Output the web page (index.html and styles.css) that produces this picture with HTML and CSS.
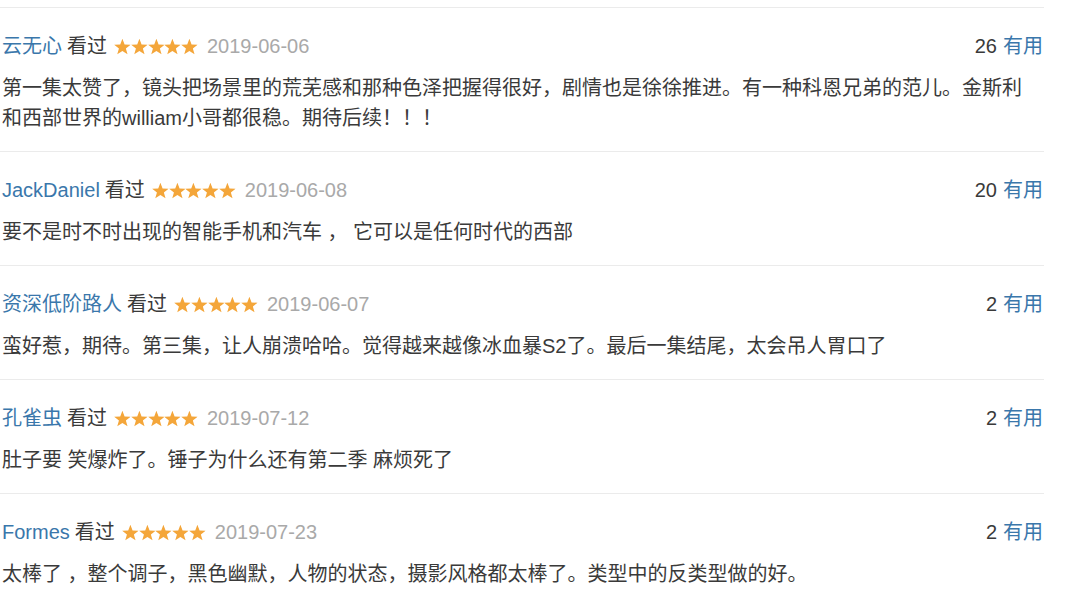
FILE: index.html
```html
<!DOCTYPE html>
<html lang="zh-CN">
<head>
<meta charset="utf-8">
<title>短评</title>
<link rel="stylesheet" href="styles.css">
</head>
<body>
<svg width="0" height="0" class="defs" aria-hidden="true">
  <defs>
    <symbol id="star" viewBox="0 0 17 16">
      <polygon points="8.5,0.2 10.7,5.9 16.8,6.2 12.0,10.0 13.7,15.9 8.5,12.6 3.3,15.9 5.0,10.0 0.2,6.2 6.3,5.9" fill="#f4a63a"/>
    </symbol>
  </defs>
</svg>
<div class="comments">
  <div class="comment">
    <div class="head">
      <div class="info">
        <span class="user">云无心</span><span class="seen">看过</span>
        <span class="stars"><svg><use href="#star"/></svg><svg><use href="#star"/></svg><svg><use href="#star"/></svg><svg><use href="#star"/></svg><svg><use href="#star"/></svg></span>
        <span class="date">2019-06-06</span>
      </div>
      <div class="votes"><span class="count">26</span><span class="useful">有用</span></div>
    </div>
    <p class="text">第一集太赞了，镜头把场景里的荒芜感和那种色泽把握得很好，剧情也是徐徐推进。有一种科恩兄弟的范儿。金斯利和西部世界的william小哥都很稳。期待后续！！！</p>
  </div>
  <div class="comment">
    <div class="head">
      <div class="info">
        <span class="user">JackDaniel</span><span class="seen">看过</span>
        <span class="stars"><svg><use href="#star"/></svg><svg><use href="#star"/></svg><svg><use href="#star"/></svg><svg><use href="#star"/></svg><svg><use href="#star"/></svg></span>
        <span class="date">2019-06-08</span>
      </div>
      <div class="votes"><span class="count">20</span><span class="useful">有用</span></div>
    </div>
    <p class="text">要不是时不时出现的智能手机和汽车 ， 它可以是任何时代的西部</p>
  </div>
  <div class="comment">
    <div class="head">
      <div class="info">
        <span class="user">资深低阶路人</span><span class="seen">看过</span>
        <span class="stars"><svg><use href="#star"/></svg><svg><use href="#star"/></svg><svg><use href="#star"/></svg><svg><use href="#star"/></svg><svg><use href="#star"/></svg></span>
        <span class="date">2019-06-07</span>
      </div>
      <div class="votes"><span class="count">2</span><span class="useful">有用</span></div>
    </div>
    <p class="text">蛮好惹，期待。第三集，让人崩溃哈哈。觉得越来越像冰血暴S2了。最后一集结尾，太会吊人胃口了</p>
  </div>
  <div class="comment">
    <div class="head">
      <div class="info">
        <span class="user">孔雀虫</span><span class="seen">看过</span>
        <span class="stars"><svg><use href="#star"/></svg><svg><use href="#star"/></svg><svg><use href="#star"/></svg><svg><use href="#star"/></svg><svg><use href="#star"/></svg></span>
        <span class="date">2019-07-12</span>
      </div>
      <div class="votes"><span class="count">2</span><span class="useful">有用</span></div>
    </div>
    <p class="text">肚子要 笑爆炸了。锤子为什么还有第二季 麻烦死了</p>
  </div>
  <div class="comment">
    <div class="head">
      <div class="info">
        <span class="user">Formes</span><span class="seen">看过</span>
        <span class="stars"><svg><use href="#star"/></svg><svg><use href="#star"/></svg><svg><use href="#star"/></svg><svg><use href="#star"/></svg><svg><use href="#star"/></svg></span>
        <span class="date">2019-07-23</span>
      </div>
      <div class="votes"><span class="count">2</span><span class="useful">有用</span></div>
    </div>
    <p class="text">太棒了 ，整个调子，黑色幽默，人物的状态，摄影风格都太棒了。类型中的反类型做的好。</p>
  </div>
</div>
</body>
</html>
```

FILE: styles.css
```css
html, body {
  margin: 0;
  padding: 0;
  background: #fff;
}

body {
  font-family: "Liberation Sans", "Noto Sans CJK SC", sans-serif;
  font-size: 20px;
  color: #3a3a3a;
}

.defs {
  position: absolute;
  width: 0;
  height: 0;
}

.comments {
  width: 1044px;
  padding-top: 7px;
}

.comment {
  border-top: 1px solid #ebebeb;
  padding: 23px 1px 18px 2px;
}

.head {
  display: flex;
  justify-content: space-between;
  align-items: center;
  height: 30px;
  line-height: 30px;
  margin-bottom: 12px;
}

.info {
  display: flex;
  align-items: center;
}

.user {
  color: #3a77ab;
  margin-right: 5px;
}

.seen {
  color: #3a3a3a;
}

.stars {
  display: flex;
  margin: 0 9px 0 7px;
  height: 17px;
}

.stars svg {
  width: 16.8px;
  height: 17px;
  display: block;
}

.date {
  color: #a9a9a9;
}

.votes {
  display: flex;
  align-items: center;
}

.count {
  color: #3a3a3a;
  margin-right: 6px;
}

.useful {
  color: #3a77ab;
}

.text {
  margin: 0;
  padding-right: 16px;
  line-height: 30px;
  color: #3a3a3a;
}
```
